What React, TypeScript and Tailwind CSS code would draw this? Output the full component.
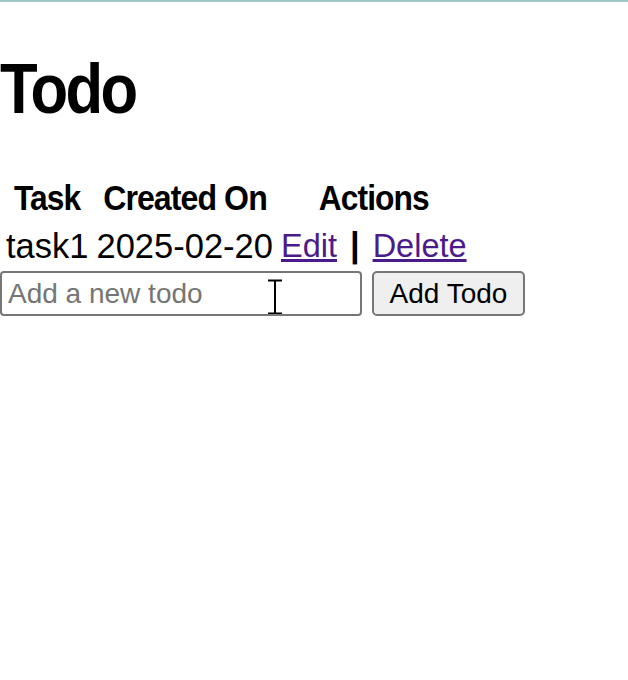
export default function App() {
  return (
    <div className="relative min-h-[680px] bg-white font-['Liberation_Sans',Arial,sans-serif] text-black">
      {/* thin top rule */}
      <div className="h-[2px] bg-[#a3c4c8]" />

      <h1 className="mt-[47px] mb-[44px] text-[70px] font-bold leading-[80px]">
        <span className="inline-block origin-left scale-x-[0.88] tracking-[-3px]">Todo</span>
      </h1>

      <table className="border-separate border-spacing-[4px] text-[34.5px] leading-[39px]">
        <thead>
          <tr>
            <th className="p-[2px] text-center font-bold">
              <span className="inline-block scale-x-[0.92] tracking-[-1px]">Task</span>
            </th>
            <th className="p-[2px] text-center font-bold">
              <span className="inline-block scale-x-[0.93] tracking-[-1px]">Created On</span>
            </th>
            <th className="p-[2px] text-center font-bold">
              <span className="inline-block scale-x-[0.92] tracking-[-1px]">Actions</span>
            </th>
          </tr>
        </thead>
        <tbody>
          <tr>
            <td className="p-[2px]">task1</td>
            <td className="p-[2px]">2025-02-20</td>
            <td className="p-[2px]">
              <a href="#" className="text-[32.5px] text-[#4b1a8b] underline">Edit</a>
              <span className="mx-[13px] font-bold">|</span>
              <a href="#" className="text-[32.5px] text-[#4b1a8b] underline">Delete</a>
            </td>
          </tr>
        </tbody>
      </table>

      <form className="-mt-[1px] flex gap-[10px]" onSubmit={(e) => e.preventDefault()}>
        <input
          type="text"
          placeholder="Add a new todo"
          className="h-[45px] w-[362px] rounded-[4px] border-2 border-[#767676] bg-white pl-[6px] text-[28px] placeholder:text-[#757575] outline-none"
        />
        <button
          type="submit"
          className="h-[45px] w-[153px] rounded-[5px] border-2 border-[#767676] bg-[#efefef] text-center text-[28px]"
        >
          Add Todo
        </button>
      </form>

      {/* mouse cursor over the input */}
      <svg className="absolute left-[266px] top-[279px]" width="18" height="36" viewBox="0 0 18 36">
        <path d="M2 1.5h14M9 1.5v33M2 34.5h14" stroke="#fff" strokeWidth="4" fill="none" />
        <path d="M2 1.5h14M9 1.5v33M2 34.5h14" stroke="#000" strokeWidth="2" fill="none" />
      </svg>
    </div>
  )
}
